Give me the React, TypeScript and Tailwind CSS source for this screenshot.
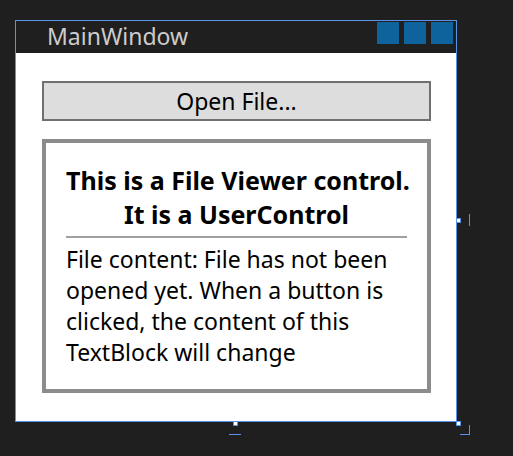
export default function App() {
  const font = { fontFamily: '"Noto Sans", "Open Sans", sans-serif' };
  return (
    <div className="relative w-[513px] h-[456px] bg-[#1f1f1f] pt-[20px] pl-[15px]" style={font}>
      {/* Window */}
      <div className="w-[442px] h-[402px] border border-[#5a93e6] flex flex-col">
        {/* Title bar */}
        <div className="h-[32px] bg-[#1f1f1f] flex items-center justify-between pl-[31px] pr-[3px]">
          <span className="text-[23px] leading-none text-[#cccccc] -mt-[2px]">MainWindow</span>
          <div className="flex items-center gap-[5px] -mt-[8px]">
            <div className="w-[22px] h-[22px] bg-[#0e639c]" />
            <div className="w-[22px] h-[22px] bg-[#0e639c]" />
            <div className="w-[22px] h-[22px] bg-[#0e639c]" />
          </div>
        </div>

        {/* Content */}
        <div className="flex-1 bg-white pt-[28px] px-[26px]">
          <button className="w-[389px] h-[40px] bg-[#dddddd] border-2 border-[#707070] text-[23px] leading-none text-black flex items-center justify-center">
            Open File...
          </button>

          <div className="mt-[18px] w-[389px] h-[254px] border-4 border-[#8c8c8c] px-[20px] pt-[20px]">
            <div className="text-[25px] leading-[34px] font-bold text-black text-center whitespace-nowrap">
              <div>This is a File Viewer control.</div>
              <div>It is a UserControl</div>
            </div>
            <div className="mt-[5px] h-[2px] bg-[#a0a0a0]" />
            <div className="mt-[6px] text-[23px] leading-[31px] text-black whitespace-nowrap">
              <div>File content: File has not been</div>
              <div>opened yet. When a button is</div>
              <div>clicked, the content of this</div>
              <div>TextBlock will change</div>
            </div>
          </div>
        </div>
      </div>

      {/* Design-time resize handles */}
      <div className="absolute left-[456px] top-[218px] w-[5px] h-[5px] bg-white border border-[#5a93e6]" />
      <div className="absolute left-[469px] top-[214px] w-px h-[12px] bg-[#5a93e6]" />
      <div className="absolute left-[233px] top-[421px] w-[5px] h-[5px] bg-white border border-[#5a93e6]" />
      <div className="absolute left-[229px] top-[434px] w-[12px] h-px bg-[#5a93e6]" />
      <div className="absolute left-[456px] top-[421px] w-[5px] h-[5px] bg-white border border-[#5a93e6]" />
      <div className="absolute left-[460px] top-[425px] w-[10px] h-[10px] border-r border-b border-[#5a93e6]" />
    </div>
  );
}
